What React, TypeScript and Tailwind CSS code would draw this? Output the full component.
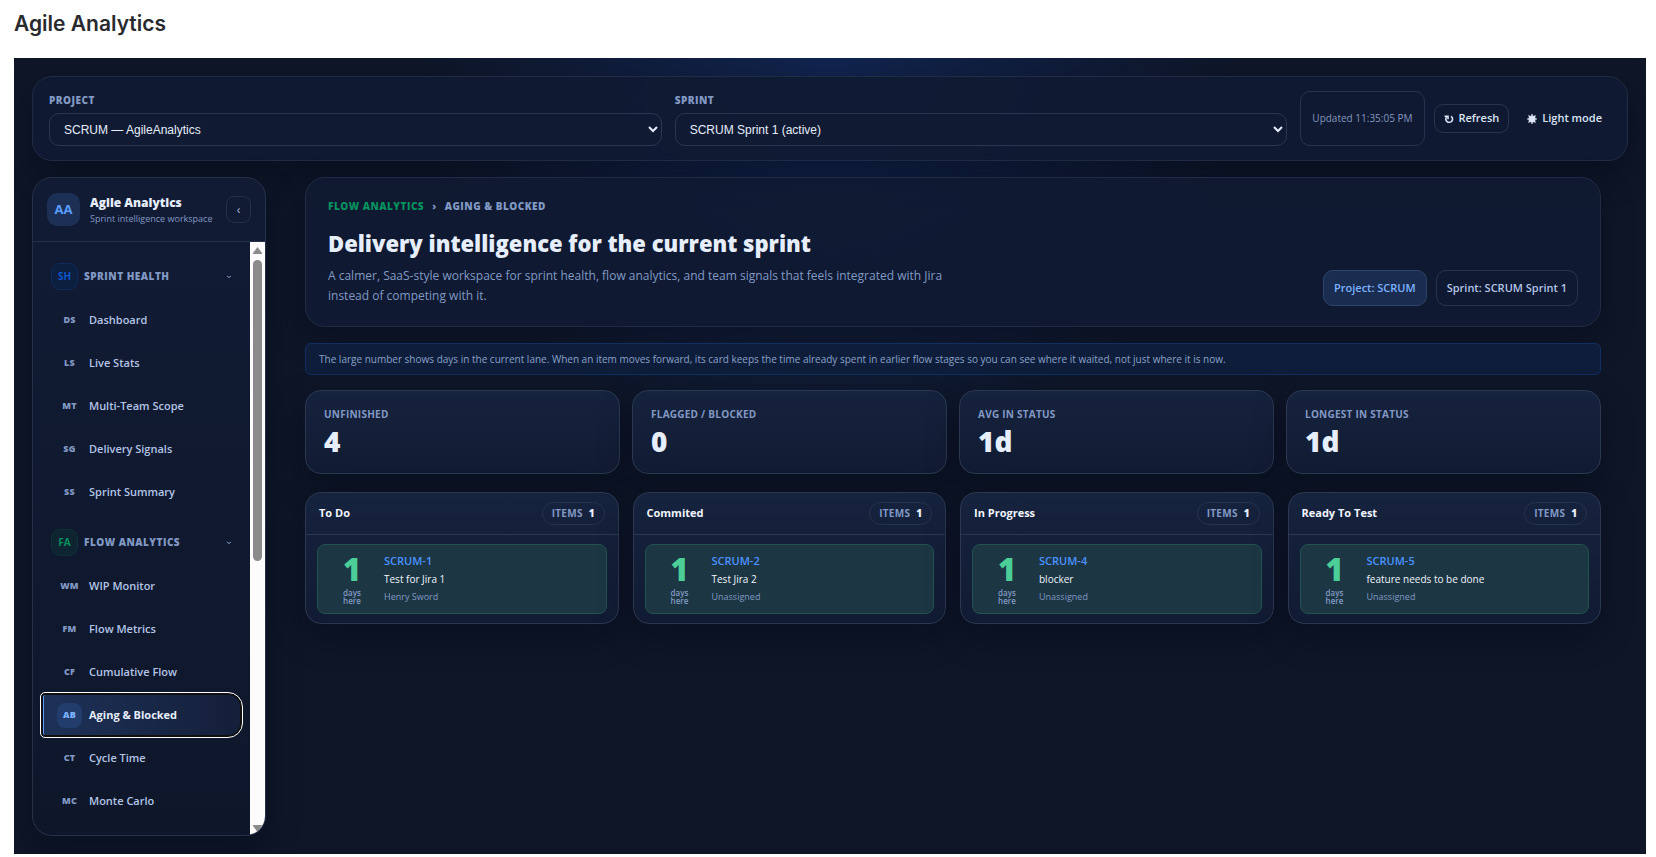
import { useState } from 'react';
import { clsx } from 'clsx';

type NavItem = { code: string; label: string };
type NavSection = { code: string; label: string; badge: string; items: NavItem[] };

const sections: NavSection[] = [
  {
    code: 'SH',
    label: 'Sprint Health',
    badge: 'border-[#0c2a5c] bg-[#0d1f3f] text-[#0b55cf]',
    items: [
      { code: 'DS', label: 'Dashboard' },
      { code: 'LS', label: 'Live Stats' },
      { code: 'MT', label: 'Multi-Team Scope' },
      { code: 'SG', label: 'Delivery Signals' },
      { code: 'SS', label: 'Sprint Summary' },
    ],
  },
  {
    code: 'FA',
    label: 'Flow Analytics',
    badge: 'border-[#0d3236] bg-[#0e2430] text-[#06915f]',
    items: [
      { code: 'WM', label: 'WIP Monitor' },
      { code: 'FM', label: 'Flow Metrics' },
      { code: 'CF', label: 'Cumulative Flow' },
      { code: 'AB', label: 'Aging & Blocked' },
      { code: 'CT', label: 'Cycle Time' },
      { code: 'MC', label: 'Monte Carlo' },
    ],
  },
];

const stats = [
  { label: 'Unfinished', value: '4' },
  { label: 'Flagged / Blocked', value: '0' },
  { label: 'Avg in status', value: '1d' },
  { label: 'Longest in status', value: '1d' },
];

const lanes = [
  { name: 'To Do', issue: 'SCRUM-1', title: 'Test for Jira 1', assignee: 'Henry Sword' },
  { name: 'Commited', issue: 'SCRUM-2', title: 'Test Jira 2', assignee: 'Unassigned' },
  { name: 'In Progress', issue: 'SCRUM-4', title: 'blocker', assignee: 'Unassigned' },
  { name: 'Ready To Test', issue: 'SCRUM-5', title: 'feature needs to be done', assignee: 'Unassigned' },
];

export default function App() {
  return (
    <div className="min-h-screen bg-white pr-[10px] pb-[3px] pl-[14px] font-['Open_Sans',sans-serif]">
      <h1 className="flex h-[58px] items-start pt-[10px] font-['Inter',sans-serif] text-[21px] leading-7 font-semibold text-[#292a2e]">
        Agile Analytics
      </h1>
      <div className="overflow-hidden bg-[#0e1628] bg-[radial-gradient(circle_at_top,#11244f_0%,#0e1628_36%)] p-[18px]">
        <TopBar />
        <div className="mt-4 flex items-start gap-[39px] pr-[27px]">
          <Sidebar />
          <main className="min-w-0 flex-1">
            <Hero />
            <p className="mt-4 rounded-md border border-[#12305f] bg-[#0e1e3a] px-[13px] py-[6px] text-[10px] leading-[18px] text-[#8ba1c9]">
              The large number shows days in the current lane. When an item moves forward, its card keeps the time
              already spent in earlier flow stages so you can see where it waited, not just where it is now.
            </p>
            <div className="mt-[15px] grid grid-cols-4 gap-3">
              {stats.map((s) => (
                <div
                  key={s.label}
                  className="rounded-2xl border border-[#2b3850] bg-linear-to-b from-[#16233e] to-[#111b33] px-[18px] pt-4 pb-[15px] shadow-[0_12px_32px_rgba(2,6,18,0.35)]"
                >
                  <p className="text-[10px] leading-[14px] font-bold tracking-wide text-[#8299c4] uppercase">{s.label}</p>
                  <p className="mt-[3px] text-[28px] leading-[34px] font-extrabold text-[#e6eefb]">{s.value}</p>
                </div>
              ))}
            </div>
            <div className="mt-[18px] grid grid-cols-4 gap-[14px]">
              {lanes.map((lane) => (
                <Lane key={lane.issue} {...lane} />
              ))}
            </div>
          </main>
        </div>
      </div>
    </div>
  );
}

function TopBar() {
  return (
    <header className="flex items-center gap-[13px] rounded-[20px] border border-[#212c44] bg-[#101a32]/90 px-4 py-[14px] shadow-[0_12px_32px_rgba(2,6,18,0.35)]">
      <Picker id="project" label="Project" option="SCRUM — AgileAnalytics" />
      <Picker id="sprint" label="Sprint" option="SCRUM Sprint 1 (active)" />
      <div className="flex items-center gap-[9px]">
        <span className="flex h-[55px] items-center rounded-[10px] border border-[#28344d] px-[11px] text-[10px] text-[#8397bd]">
          Updated 11:35:05 PM
        </span>
        <button className="flex h-[29px] items-center gap-[5px] rounded-[9px] border border-[#28344d] px-[9px] text-[11px] font-semibold text-[#dbe5f6]">
          <svg viewBox="0 0 10 10" className="size-[10px]" fill="none" stroke="currentColor" strokeWidth="1.6">
            <path d="M7 2.4A3.4 3.2 0 1 1 2.6 3" />
            <path d="M0.6 2.2h3.4v3" />
          </svg>
          Refresh
        </button>
        <button className="flex h-[29px] items-center gap-[5px] px-[9px] text-[11px] font-semibold text-[#dbe5f6]">
          <svg viewBox="0 0 10 10" className="size-[10px]" fill="currentColor" stroke="currentColor" strokeWidth="1.2">
            <circle cx="5" cy="5" r="3" />
            <path d="M5 0v10M0 5h10M1.5 1.5l7 7M8.5 1.5l-7 7" />
          </svg>
          Light mode
        </button>
      </div>
    </header>
  );
}

function Picker({ id, label, option }: { id: string; label: string; option: string }) {
  return (
    <div className="min-w-0 flex-1">
      <label htmlFor={id} className="block pt-[2px] text-[10px] leading-[14px] font-extrabold tracking-wider text-[#8299c4] uppercase">
        {label}
      </label>
      <select
        id={id}
        className="mt-[6px] block h-[33px] w-full rounded-[10px] border border-[#2b3750] bg-[#101a32] pl-[10px] font-['Liberation_Sans',sans-serif] text-xs text-[#e6eefb]"
      >
        <option>{option}</option>
      </select>
    </div>
  );
}

function Sidebar() {
  const [active, setActive] = useState('AB');

  return (
    <aside className="w-[234px] shrink-0 overflow-hidden rounded-[20px] border border-[#263149] bg-linear-to-b from-[#111b34] to-[#0e172a] shadow-[0_12px_32px_rgba(2,6,18,0.35)]">
      <div className="flex h-16 items-center border-b border-[#263149] px-[14px]">
        <span className="flex size-[33px] shrink-0 items-center justify-center rounded-[10px] bg-[#1b3054] text-[13px] font-bold text-[#5a9cff]">
          AA
        </span>
        <div className="ml-[10px] min-w-0 flex-1 whitespace-nowrap">
          <p className="text-xs leading-[18px] font-extrabold text-[#e6eefb]">Agile Analytics</p>
          <p className="text-[9px] leading-[14px] text-[#8299c4]">Sprint intelligence workspace</p>
        </div>
        <button
          aria-label="Collapse sidebar"
          className="flex h-[27px] w-[25px] shrink-0 items-center justify-center rounded-lg border border-[#263149] text-xs text-[#a9b9d8]"
        >
          ‹
        </button>
      </div>
      <div className="flex">
        <nav className="min-w-0 flex-1 px-[10px] pt-[13px] pb-[14px]">
          {sections.map((section) => (
            <div key={section.code} className="mb-[9px] last:mb-0">
              <button className="flex h-[43px] w-full items-center px-2 text-[10px] font-bold text-[#8299c4]">
                <span
                  className={clsx('flex size-[27px] items-center justify-center rounded-[9px] border', section.badge)}
                >
                  {section.code}
                </span>
                <span className="ml-[6px] flex-1 text-left font-extrabold tracking-wider uppercase">{section.label}</span>
                <svg viewBox="0 0 6 4" className="h-1 w-[6px]" fill="none" stroke="currentColor">
                  <path d="M1 1l2 1.5L5 1" />
                </svg>
              </button>
              <div className="flex flex-col gap-[3px] pt-[2px]">
                {section.items.map((item) => (
                  <NavButton
                    key={item.code}
                    item={item}
                    active={active === item.code}
                    onClick={() => setActive(item.code)}
                  />
                ))}
              </div>
            </div>
          ))}
        </nav>
        <ScrollTrack />
      </div>
    </aside>
  );
}

function NavButton({ item, active, onClick }: { item: NavItem; active: boolean; onClick: () => void }) {
  return (
    <button
      onClick={onClick}
      className={clsx(
        'flex h-10 w-full items-center rounded-l-xs rounded-r-xl border-l pl-[13px] text-[11px]',
        active
          ? 'border-[#5a9cff] bg-linear-to-r from-[#1d3157] to-[#141f3a] font-bold text-[#e6eefb] ring-2 ring-[#101010] outline-1 outline-offset-2 outline-white'
          : 'border-transparent font-semibold text-[#b4c5e6]'
      )}
    >
      <span
        className={clsx(
          'flex size-[25px] items-center justify-center rounded-lg text-[9px] font-extrabold tracking-wide',
          active ? 'bg-[#223d6b] text-[#7db3ff]' : 'text-[#8299c4]'
        )}
      >
        {item.code}
      </span>
      <span className="ml-[7px]">{item.label}</span>
    </button>
  );
}

function ScrollTrack() {
  return (
    <div className="flex w-[15px] shrink-0 flex-col items-center bg-[#fcfcfc] pt-[5px]">
      <svg viewBox="0 0 9 7" className="h-[7px] w-[9px]" fill="#8b8b8b">
        <path d="M4.5 0L9 6v1H0V6z" />
      </svg>
      <div className="mt-[6px] h-[301px] w-[9px] rounded-full bg-[#8b8b8b]" />
      <svg viewBox="0 0 9 7" className="mt-auto mb-[3px] h-[7px] w-[9px]" fill="#8b8b8b">
        <path d="M4.5 7L0 1V0h9v1z" />
      </svg>
    </div>
  );
}

function Hero() {
  return (
    <section className="flex items-end justify-between gap-6 rounded-[20px] border border-[#212c44] bg-[#101a32]/90 px-[22px] pt-[21px] pb-5 shadow-[0_12px_32px_rgba(2,6,18,0.35)]">
      <div>
        <p className="flex gap-2 text-[10px] leading-[14px] font-extrabold tracking-wider text-[#8299c4] uppercase">
          <a href="#flow" className="text-[#06915f]">
            Flow Analytics
          </a>
          <span>›</span>
          <span>Aging &amp; Blocked</span>
        </p>
        <h2 className="mt-[14px] text-[22px] leading-8 font-extrabold text-[#e6eefb]">
          Delivery intelligence for the current sprint
        </h2>
        <p className="mt-[7px] max-w-[630px] text-xs leading-5 text-[#8299c4]">
          A calmer, SaaS-style workspace for sprint health, flow analytics, and team signals that feels integrated with
          Jira instead of competing with it.
        </p>
      </div>
      <div className="flex shrink-0 gap-[9px] text-[11px] leading-[18px] font-semibold">
        <span className="rounded-[10px] border border-[#2f4468] bg-[#1a2c50] px-[10px] py-2 text-[#7db3ff]">
          Project: SCRUM
        </span>
        <span className="rounded-[10px] border border-[#28344d] px-[10px] py-2 text-[#b4c5e6]">
          Sprint: SCRUM Sprint 1
        </span>
      </div>
    </section>
  );
}

function Lane({ name, issue, title, assignee }: (typeof lanes)[number]) {
  return (
    <section className="rounded-2xl border border-[#2b3850] bg-linear-to-b from-[#16233e] to-[#111b33] shadow-[0_12px_32px_rgba(2,6,18,0.35)]">
      <div className="flex h-[42px] items-center justify-between border-b border-[#2b3850] px-[13px]">
        <h3 className="text-[11px] font-bold text-[#f1f5fc]">{name}</h3>
        <span className="flex h-[23px] items-center gap-[6px] rounded-full border border-[#25324c] px-[9px] text-[10px] font-bold text-[#8299c4]">
          <span className="tracking-wide">ITEMS</span>
          <b className="text-[#e6eefb]">1</b>
        </span>
      </div>
      <div className="px-[11px] py-[9px]">
        <article className="flex items-center rounded-lg border border-[#23524f] bg-[#1c3643] py-[7px] pl-3">
          <div className="w-11 text-center">
            <p className="text-[31px] leading-[31px] font-extrabold text-[#4bce97]">1</p>
            <p className="mx-auto mt-1 w-7 text-[8px] leading-2 font-semibold text-[#8299c4]">days here</p>
          </div>
          <div className="ml-[10px]">
            <a href={`#${issue}`} className="block text-[11px] leading-[18px] font-semibold text-[#4c93ff]">
              {issue}
            </a>
            <p className="text-[10px] leading-[18px] text-[#f1f5fc]">{title}</p>
            <p className="text-[9px] leading-[18px] text-[#8299c4]">{assignee}</p>
          </div>
        </article>
      </div>
    </section>
  );
}
